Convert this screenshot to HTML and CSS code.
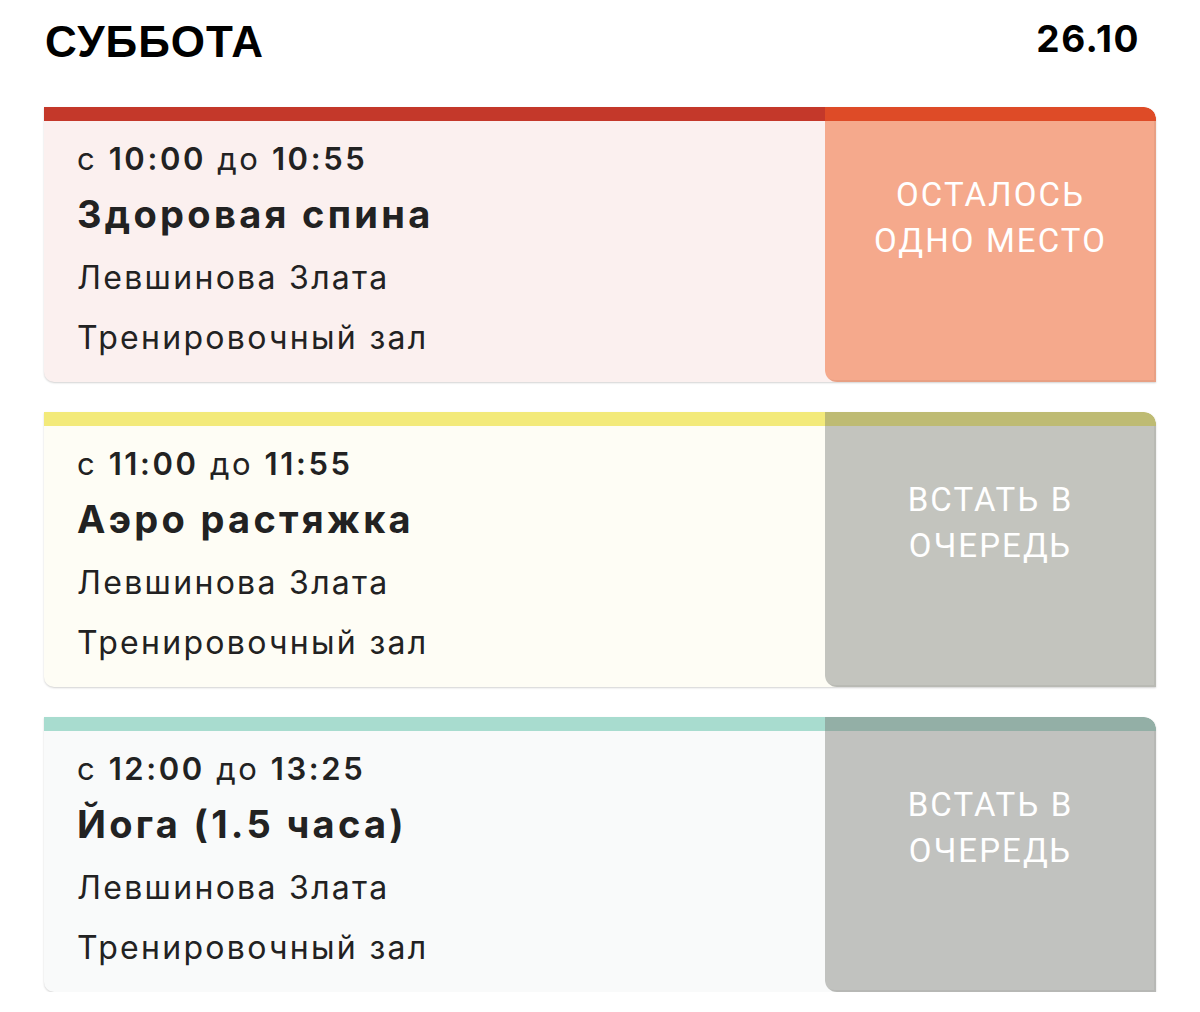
FILE: index.html
```html
<!DOCTYPE html>
<html lang="ru">
<head>
<meta charset="utf-8">
<link rel="stylesheet" href="styles.css">
</head>
<body>
<div class="page">
  <header class="day-header">
    <h1 class="day-name">СУББОТА</h1>
    <div class="day-date">26.10</div>
  </header>
  <div class="list">
    <div class="card card-red">
      <div class="info">
        <div class="time">с <b>10:00</b> до <b>10:55</b></div>
        <div class="title">Здоровая спина</div>
        <div class="meta meta-first">Левшинова Злата</div>
        <div class="meta">Тренировочный зал</div>
      </div>
      <div class="action">ОСТАЛОСЬ<br>ОДНО МЕСТО</div>
    </div>
    <div class="card card-yellow">
      <div class="info">
        <div class="time">с <b>11:00</b> до <b>11:55</b></div>
        <div class="title">Аэро растяжка</div>
        <div class="meta meta-first">Левшинова Злата</div>
        <div class="meta">Тренировочный зал</div>
      </div>
      <div class="action">ВСТАТЬ В<br>ОЧЕРЕДЬ</div>
    </div>
    <div class="card card-teal">
      <div class="info">
        <div class="time">с <b>12:00</b> до <b>13:25</b></div>
        <div class="title">Йога (1.5 часа)</div>
        <div class="meta meta-first">Левшинова Злата</div>
        <div class="meta">Тренировочный зал</div>
      </div>
      <div class="action">ВСТАТЬ В<br>ОЧЕРЕДЬ</div>
    </div>
  </div>
</div>
</body>
</html>
```
FILE: styles.css
```css
html, body {
  margin: 0;
  padding: 0;
  background: #ffffff;
}

.page {
  width: 1200px;
  font-family: Inter, "Noto Sans", sans-serif;
  color: #222222;
}

.day-header {
  display: flex;
  justify-content: space-between;
  align-items: flex-start;
  padding: 17px 60px 0 45px;
  height: 50px;
  margin-bottom: 40px;
}

.day-name {
  margin: 0;
  font-family: "Liberation Sans", Arial, sans-serif;
  font-weight: 700;
  font-size: 44px;
  line-height: 50px;
  letter-spacing: 1px;
  color: #000000;
}

.day-date {
  font-family: Inter, sans-serif;
  font-weight: 700;
  font-size: 37px;
  line-height: 44px;
  letter-spacing: 1.5px;
  color: #000000;
}

.list {
  display: flex;
  flex-direction: column;
  gap: 30px;
  padding-left: 44px;
  width: 1112px;
}

.card {
  display: flex;
  height: 275px;
  border-radius: 0 12px 0 10px;
  overflow: hidden;
  box-shadow: 0 1px 2px rgba(0, 0, 0, 0.18);
}

.info {
  flex: 1;
  padding: 20px 0 0 33px;
  border-top: 14px solid;
}

.time {
  font-size: 31px;
  line-height: 36px;
  font-weight: 400;
  letter-spacing: 2.6px;
}

.time b {
  font-weight: 600;
}

.title {
  margin-top: 15px;
  font-size: 38px;
  line-height: 44px;
  font-weight: 700;
  letter-spacing: 3.3px;
}

.meta {
  margin-top: 20px;
  font-size: 32px;
  line-height: 40px;
  font-weight: 400;
  letter-spacing: 2.3px;
}

.meta-first {
  margin-top: 22px;
}

.action {
  width: 331px;
  flex: none;
  border-top: 14px solid;
  border-radius: 0 12px 0 12px;
  padding-top: 51px;
  box-sizing: border-box;
  text-align: center;
  font-family: Roboto, "Liberation Sans", sans-serif;
  font-size: 33px;
  line-height: 46px;
  letter-spacing: 2.1px;
  color: #ffffff;
  box-shadow: inset -2px -2px 0 rgba(0, 0, 0, 0.05);
}

.card-red { background: #fbf0ef; }
.card-red .info { border-top-color: #c4382a; }
.card-red .action { border-top-color: #de4b27; background: #f5a98c; }

.card-yellow { background: #fefdf5; }
.card-yellow .info { border-top-color: #f3ea7a; }
.card-yellow .action { border-top-color: #bebb73; background: #c3c4be; }

.card-teal { background: #f9fafa; }
.card-teal .info { border-top-color: #a8dccf; }
.card-teal .action { border-top-color: #93afa6; background: #c1c2bf; }
```
